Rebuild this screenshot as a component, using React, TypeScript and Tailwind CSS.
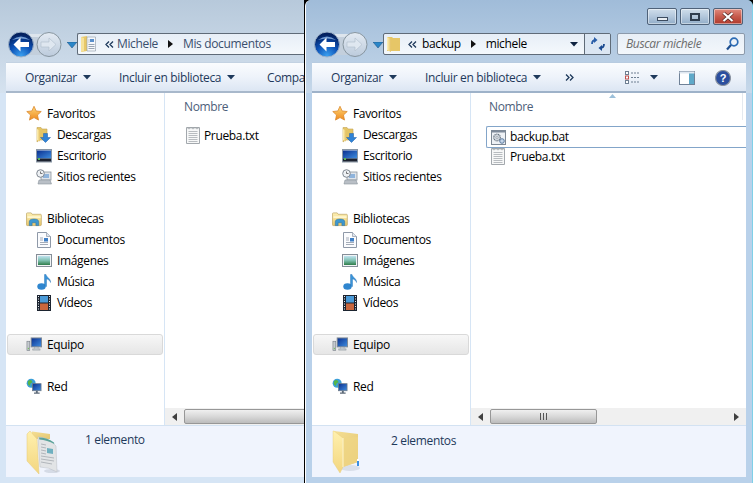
import React from "react";

const Grads = () => (
  <svg width="0" height="0" className="absolute">
    <defs>
      <linearGradient id="fold" x1="0" y1="0" x2="0" y2="1"><stop offset="0" stopColor="#fdf0b4" /><stop offset="1" stopColor="#e8c76c" /></linearGradient>
      <linearGradient id="foldd" x1="0" y1="0" x2="1" y2="0"><stop offset="0" stopColor="#fff2b8" /><stop offset="1" stopColor="#e3c063" /></linearGradient>
      <linearGradient id="flap" x1="0" y1="0" x2="0" y2="1"><stop offset="0" stopColor="#fff0ae" /><stop offset="1" stopColor="#f3d67f" /></linearGradient>
      <linearGradient id="bk" x1="0" y1="0" x2="1" y2="1"><stop offset="0" stopColor="#f5df94" /><stop offset="1" stopColor="#e3c672" /></linearGradient>
      <radialGradient id="back" cx="0.5" cy="0.95" r="0.85"><stop offset="0" stopColor="#3aa0f0" /><stop offset="0.55" stopColor="#0b4fb4" /><stop offset="1" stopColor="#04215f" /></radialGradient>
      <linearGradient id="fwd" x1="0" y1="0" x2="0" y2="1"><stop offset="0" stopColor="#e4ebf3" /><stop offset="1" stopColor="#bccbdc" /></linearGradient>
      <linearGradient id="star" x1="0" y1="0" x2="0" y2="1"><stop offset="0" stopColor="#fdd77a" /><stop offset="1" stopColor="#f08a1c" /></linearGradient>
      <linearGradient id="screen" x1="0" y1="0" x2="1" y2="1"><stop offset="0" stopColor="#0a2f8f" /><stop offset="1" stopColor="#3f8ee0" /></linearGradient>
      <linearGradient id="land" x1="0" y1="0" x2="0" y2="1"><stop offset="0" stopColor="#bfe2ef" /><stop offset="0.5" stopColor="#7fc0b0" /><stop offset="1" stopColor="#2f7d4a" /></linearGradient>
    </defs>
  </svg>
);

const StarIcon = () => (
  <svg width="17" height="17" viewBox="0 0 17 17"><path d="M8.5 .8l2.3 5 5.4.6-4 3.7 1.100 5.400-4.800-2.700-4.800 2.700 1.100-5.400-4-3.700 5.400-.6z" fill="url(#star)" stroke="#d9862a" strokeWidth=".8" /></svg>
);
const DownloadsIcon = () => (
  <svg width="16" height="17" viewBox="0 0 16 17">
    <path d="M1 1.500h4l1 1.500h5v11H3.500L1 16z" fill="#e5c565" stroke="#c2a455" strokeWidth=".6" />
    <path d="M1 3l3 1.500V15.500L1 14z" fill="url(#foldd)" />
    <path d="M7.500 7.500h4v4h3l-5 5-5-5h3z" fill="#2f83d6" stroke="#1f5fa8" strokeWidth=".5" />
  </svg>
);
const DesktopIcon = () => (
  <svg width="16" height="14" viewBox="0 0 16 14">
    <rect x=".5" y=".5" width="15" height="12.500" fill="#d8dee6" stroke="#8a97a6" />
    <rect x="1" y="1.500" width="14" height="8" fill="url(#screen)" />
    <rect x="1" y="9.500" width="14" height="3" fill="#1c2230" />
    <rect x="2" y="9" width="2" height="2" fill="#5ab55a" />
  </svg>
);
const RecentIcon = () => (
  <svg width="16" height="16" viewBox="0 0 16 16">
    <rect x="5" y="3" width="10" height="8" fill="#dfe4ea" stroke="#8c949c" strokeWidth=".8" />
    <rect x="7" y="5" width="6" height="4" fill="#8fb4dc" />
    <path d="M3 11h11l1.500 4H2z" fill="#b9bfc6" stroke="#8c949c" strokeWidth=".6" />
    <circle cx="4.500" cy="4.500" r="3.800" fill="#eef1f4" stroke="#7f8790" />
    <path d="M4.500 2.500v2h2" fill="none" stroke="#555" strokeWidth=".8" />
  </svg>
);
const LibraryIcon = () => (
  <svg width="17" height="16" viewBox="0 0 17 16">
    <path d="M.5 2.500q0-1 1-1h4l1 1.500h9q.8 0 .8 1V14q0 1-1 1H1.500q-1 0-1-1z" fill="url(#fold)" stroke="#b99f5c" strokeWidth=".7" />
    <rect x="1.500" y="5" width="14" height="2" fill="#fff6cf" />
    <path d="M3.500 15v-4q0-3 5-3t5 3v4h-3v-3h-4v3z" fill="#3d97cf" stroke="#1d6a9e" strokeWidth=".5" />
  </svg>
);
const DocIcon = () => (
  <svg width="14" height="16" viewBox="0 0 14 16">
    <path d="M.5.500h9l4 4v11H.5z" fill="#fbfcfe" stroke="#8f99a8" />
    <path d="M9.500.500v4h4" fill="#dfe5ee" stroke="#8f99a8" strokeWidth=".7" />
    <rect x="7" y="6" width="4" height="3.500" fill="#3f7fc6" />
    <path d="M3 6h3M3 8h3M3 10.500h8M3 12.500h8" stroke="#9aa3b0" strokeWidth=".9" />
  </svg>
);
const ImagesIcon = () => (
  <svg width="16" height="13" viewBox="0 0 16 13">
    <rect x=".5" y=".5" width="15" height="12" fill="#f2f4f6" stroke="#858e98" />
    <rect x="2" y="2" width="12" height="9" fill="url(#land)" />
  </svg>
);
const MusicIcon = () => (
  <svg width="15" height="16" viewBox="0 0 15 16">
    <ellipse cx="4.500" cy="12.500" rx="4.200" ry="3.200" fill="#2f86cf" />
    <path d="M7.500 12V.5l1.500 0c.5 3 5 4 4.500 8-.5-2-2.500-3.500-4-3.500V12.500z" fill="#3a93d8" stroke="#1f6cb0" strokeWidth=".4" />
  </svg>
);
const VideoIcon = () => (
  <svg width="14" height="16" viewBox="0 0 14 16">
    <rect width="14" height="16" fill="#1c2430" />
    <rect x="3" y="1" width="8" height="6.500" fill="#4a9ad8" />
    <rect x="3" y="8.500" width="8" height="6.500" fill="#c9663d" />
    <path d="M1 1.500h1M1 4h1M1 6.500h1M1 9h1M1 11.500h1M1 14h1M12 1.500h1M12 4h1M12 6.500h1M12 9h1M12 11.500h1M12 14h1" stroke="#e8edf2" />
  </svg>
);
const ComputerIcon = () => (
  <svg width="17" height="16" viewBox="0 0 17 16">
    <rect x="1" y="4" width="3" height="10" fill="#c5cacf" stroke="#737b83" strokeWidth=".6" />
    <rect x="2" y="11" width="1" height="1.500" fill="#6bc04b" />
    <rect x="5.500" y=".5" width="11" height="9.500" fill="url(#screen)" stroke="#7f8994" />
    <path d="M9 10h4v2h2v1.500H7V12h2z" fill="#bfc5cb" stroke="#858d95" strokeWidth=".4" />
  </svg>
);
const NetworkIcon = () => (
  <svg width="17" height="17" viewBox="0 0 17 17">
    <circle cx="5.500" cy="5" r="4.800" fill="#3b9fd8" />
    <path d="M2 3q2-2 4-1l1 2-2 1-1 3-2-2zM6 7l3 0 0 2-2 1z" fill="#56b548" />
    <rect x="7" y="5.500" width="9" height="7.500" fill="url(#screen)" stroke="#6f7a86" strokeWidth=".8" />
    <path d="M10.500 13h2v2h2v1.200h-6V15h2z" fill="#5d6a78" />
  </svg>
);
const TxtIcon = () => (
  <svg width="14" height="17" viewBox="0 0 14 17">
    <path d="M.5.500h13v16H.5z" fill="#f7f8f8" stroke="#a3a8ad" />
    <path d="M1 .5l2 1.500 2-1.500 2 1.500 2-1.500 2 1.500 2-1.500" fill="none" stroke="#9ea3a8" strokeWidth=".8" />
    <path d="M2.500 4.500h9M2.500 6.500h9M2.500 8.500h9M2.500 10.500h9M2.500 12.500h9M2.500 14.500h9" stroke="#b8bcc0" />
  </svg>
);
const BatIcon = () => (
  <svg width="15" height="15" viewBox="0 0 15 15">
    <rect x=".5" y=".5" width="14" height="14" fill="#eef1f5" stroke="#7e8894" />
    <rect x=".5" y=".5" width="14" height="2" fill="#7e8a9a" />
    <circle cx="6" cy="7.500" r="3.300" fill="#d2d8df" stroke="#68737f" strokeDasharray="1.200 .6" strokeWidth="1.200" />
    <circle cx="6" cy="7.500" r="1" fill="#fff" stroke="#68737f" strokeWidth=".5" />
    <circle cx="11" cy="11" r="2.300" fill="#c5d6ea" stroke="#4f6f96" strokeWidth=".9" />
  </svg>
);
const BigFolderDoc = () => (
  <svg width="36" height="46" viewBox="0 0 36 46">
    <ellipse cx="26" cy="42" rx="8" ry="2" fill="#c9d0dc" opacity=".7" />
    <path d="M6 2.500l18 2.500v5L6 10z" fill="url(#bk)" />
    <path d="M1 5l3-3 7 8 2 35-12-13z" fill="url(#flap)" stroke="#e6cb7a" strokeWidth=".5" />
    <path d="M12 8q10 0 18 9l1 26q-8-5-17-5z" fill="#e2e4e6" stroke="#b9bdc2" strokeWidth=".5" />
    <path d="M13 8.500q8 0 15 5l.3 1.500q-7-4-15-4.500z" fill="#5ba39a" />
    <path d="M21 19l6 1v5l-6-1z" fill="#6fb0c0" />
    <path d="M15 15l5 1M15 18l5 1M15 21l5 1M15 24l5 1M15 27l13 2M15 30l13 2M15 33l11 2" stroke="#a4a9b0" strokeWidth=".8" />
  </svg>
);
const BigFolderPlain = () => (
  <svg width="36" height="46" viewBox="0 0 36 46">
    <ellipse cx="18" cy="39" rx="10" ry="3" fill="#c9d0dc" opacity=".6" />
    <path d="M2 2l24 3v28L11 38z" fill="url(#bk)" />
    <path d="M11 9l15-1v25L11 38z" fill="#efd684" opacity=".7" />
    <path d="M1 2l1 0 9 7v29l-3 6-7-11z" fill="url(#flap)" stroke="#e6cb7a" strokeWidth=".4" />
    <path d="M11 9v29" stroke="#fff7d2" />
    <rect x="25" y="32" width="2" height="5" fill="#3b8fe0" />
    <rect x="25" y="30" width="2" height="2" fill="#fff" />
  </svg>
);

const Caret = ({ c = "#1e395b" }: { c?: string }) => (
  <svg width="8" height="5" viewBox="0 0 8 5"><path d="M0 0h8L4 4.500z" fill={c} /></svg>
);
const Chevrons = () => (
  <svg width="9" height="7" viewBox="0 0 9 7" fill="none" stroke="#1e395b" strokeWidth="1.300"><path d="M4 .5L1 3.500 4 6.500M8 .5L5 3.500 8 6.500" /></svg>
);
const Chevrons2 = () => (
  <svg width="9" height="7" viewBox="0 0 9 7" fill="none" stroke="#1e395b" strokeWidth="1.300"><path d="M1 .5L4 3.500 1 6.500M5 .5L8 3.500 5 6.500" /></svg>
);
const Sep = () => (
  <svg width="5" height="8" viewBox="0 0 5 8"><path d="M0 0l5 4-5 4z" fill="#111" /></svg>
);

const NavButtons = () => (
  <div className="flex items-start">
    <div className="ml-[1px] w-[57px] h-[27px]">
      <svg width="57" height="27" viewBox="0 0 57 27">
        <path d="M13 3h28v21H13z" fill="#c3cfdc" />
        <path d="M13 3h28v3H13z" fill="#dde5ed" />
        <circle cx="13" cy="13.500" r="12.500" fill="url(#back)" stroke="#9fb3c9" strokeWidth="1" />
        <path d="M4 9q9-7 18 0q-9-3-18 0z" fill="#8fb8e8" opacity=".8" />
        <path d="M12.500 6.500L5.500 13.500l7 7v-4.500h8.500v-5h-8.500z" fill="#fff" />
        <circle cx="41" cy="13.500" r="12" fill="url(#fwd)" stroke="#87959f" />
        <path d="M41 7l7 6.500-7 6.500v-4h-8v-5h8z" fill="#dfe7f0" stroke="#aebccb" strokeWidth=".6" />
      </svg>
    </div>
    <div className="ml-[2px] w-[10px] mt-[11px]">
      <svg width="10" height="6" viewBox="0 0 10 6"><path d="M0 0h10L5 6z" fill="#2a86c8" stroke="#1b4a78" strokeWidth=".5" /></svg>
    </div>
  </div>
);

const NavItem = ({ icon, label, sub }: { icon: React.ReactNode; label: string; sub?: boolean }) => (
  <div className={`flex items-center h-[21px] text-black ${sub ? "pl-[30px]" : "pl-[20px]"}`}>
    <span className="w-[16px] flex justify-center items-center">{icon}</span>
    <span className="ml-[5px]">{label}</span>
  </div>
);

const NavPane = () => (
  <div className="w-[158px] shrink-0 pt-[10px] bg-white">
    <NavItem icon={<StarIcon />} label="Favoritos" />
    <NavItem sub icon={<DownloadsIcon />} label="Descargas" />
    <NavItem sub icon={<DesktopIcon />} label="Escritorio" />
    <NavItem sub icon={<RecentIcon />} label="Sitios recientes" />
    <div className="h-[21px]" />
    <NavItem icon={<LibraryIcon />} label="Bibliotecas" />
    <NavItem sub icon={<DocIcon />} label="Documentos" />
    <NavItem sub icon={<ImagesIcon />} label="Imágenes" />
    <NavItem sub icon={<MusicIcon />} label="Música" />
    <NavItem sub icon={<VideoIcon />} label="Vídeos" />
    <div className="h-[21px]" />
    <div className="mx-[1px] w-[156px] h-[21px] rounded-[3px] border border-[#d9d9d9] bg-gradient-to-b from-[#f7f7f7] to-[#e6e6e6] flex items-center pl-[18px] text-black">
      <span className="w-[16px] flex justify-center"><ComputerIcon /></span>
      <span className="ml-[5px]">Equipo</span>
    </div>
    <div className="h-[21px]" />
    <NavItem icon={<NetworkIcon />} label="Red" />
  </div>
);

const ArrowBtn = ({ right }: { right?: boolean }) => (
  <div className="w-[19px] h-full shrink-0 flex items-center justify-center">
    <svg width="5" height="8" viewBox="0 0 5 8"><path d={right ? "M0 0l5 4-5 4z" : "M5 0L0 4l5 4z"} fill="#404040" /></svg>
  </div>
);

const Scrollbar = ({ thumb, showEnd }: { thumb: number; showEnd?: boolean }) => (
  <div className="h-[17px] shrink-0 flex items-center bg-[#f0f0f0] overflow-hidden">
    <ArrowBtn />
    <div className="h-[15px] shrink-0 rounded-[2px] border border-[#979797] bg-gradient-to-b from-[#f0f0f0] via-[#d8d8d8] to-[#bcbcbc] flex items-center justify-center gap-[1px]" style={{ width: thumb }}>
      {showEnd && (
        <>
          <span className="w-[1px] h-[7px] bg-[#555]" />
          <span className="w-[1px] h-[7px] bg-[#555] ml-[1px]" />
          <span className="w-[1px] h-[7px] bg-[#555] ml-[1px]" />
        </>
      )}
    </div>
    <div className="flex-1" />
    {showEnd && <ArrowBtn right />}
  </div>
);

const ToolBtn = ({ label, caret = true, w }: { label: string; caret?: boolean; w: string }) => (
  <div className={`flex items-center shrink-0 ${w}`}>
    <span className="whitespace-nowrap">{label}</span>
    {caret && <span className="ml-[6px] flex"><Caret /></span>}
  </div>
);

const WinButton = ({ kind }: { kind: "min" | "max" | "close" }) => (
  <div className={`w-[30px] h-[17px] rounded-[2px] border border-[#4f6279] flex items-center justify-center shadow-[inset_0_0_0_1px_rgba(255,255,255,.45)] ${kind === "close" ? "bg-gradient-to-b from-[#e08a7e] via-[#c65a4c] to-[#b0392c]" : "bg-gradient-to-b from-[#d0deeb] via-[#b3c7dc] to-[#92adc8]"}`}>
    {kind === "min" && <span className="block w-[11px] h-[4px] mt-[4px] bg-[#e8edf2] border border-[#3c4c60]" />}
    {kind === "max" && <span className="block w-[10px] h-[8px] bg-transparent border-2 border-[#2e3d4f]" />}
    {kind === "close" && (
      <svg width="12" height="10" viewBox="0 0 12 10"><path d="M1.500 1l9 8M10.500 1l-9 8" stroke="#4a2320" strokeWidth="3.400" /><path d="M1.500 1l9 8M10.500 1l-9 8" stroke="#fff" strokeWidth="2.200" /></svg>
    )}
  </div>
);

const StatusBar = ({ text, folder, textTop }: { text: string; folder: React.ReactNode; textTop: string }) => (
  <div className="h-[52px] shrink-0 border-t border-[#d3e2f2] bg-[#f0f4fd] flex items-start pl-[20px]">
    <span className="w-[36px] mt-[3px] flex">{folder}</span>
    <span className={`ml-[23px] text-[#1e395b] ${textTop}`}>{text}</span>
  </div>
);

export default function App() {
  return (
    <div className="w-[753px] h-[483px] flex bg-black overflow-hidden text-[12px] tracking-[-0.35px] [font-family:'Open_Sans',sans-serif]">
      <Grads />
      {/* Left window */}
      <div className="w-[304px] h-full shrink-0 flex flex-col overflow-hidden pl-[6px] pb-[6px] bg-[#d6e5f5] mr-[1px]">
        <div className="-ml-[6px] shrink-0 h-[93px] bg-gradient-to-b from-[#b7c9db] to-[#d5e2ef] flex flex-col">
          <div className="h-[31px]" />
          <div className="h-[31px] flex pl-[7px]">
            <NavButtons />
            <div className="h-[22px] mt-[2px] flex-1 flex items-center rounded-l-[2px] border border-r-0 border-[#5f6b78] bg-gradient-to-b from-[#e7eef7] to-[#f4f8fc] pl-[3px] text-[#3a4f6d] whitespace-nowrap overflow-hidden">
              <svg width="15" height="16" viewBox="0 0 15 16" className="shrink-0"><path d="M0 1l6-1v15l-6 1z" fill="#e8c868" /><path d="M6 1h8.500v14H6z" fill="#f6f8fb" stroke="#8c97a5" strokeWidth=".6" /><rect x="9" y="3" width="4" height="3" fill="#5a8fcb" /><path d="M7.500 4h1M7.500 6h1M7.500 8.500h6M7.500 10.500h6M7.500 12.500h6" stroke="#9aa5b3" /><path d="M0 1l3 1v13l-3 1z" fill="#f6e29a" /></svg>
              <span className="ml-[9px] flex"><Chevrons /></span>
              <span className="ml-[3px]">Michele</span>
              <span className="mx-[10px] flex"><Sep /></span>
              <span>Mis documentos</span>
            </div>
          </div>
          <div className="h-[31px] ml-[6px] flex items-center pl-[19px] pt-[1px] border-t border-b-2 border-t-[#c3d2e2] border-b-[#a8b8cb] bg-gradient-to-b from-[#fafcfe] via-[#eef3fa] to-[#dce6f3] text-[#1e395b] overflow-hidden">
            <ToolBtn label="Organizar" w="w-[94px]" />
            <ToolBtn label="Incluir en biblioteca" w="w-[148px]" />
            <ToolBtn label="Compar" caret={false} w="w-[37px]" />
          </div>
        </div>
        <div className="flex-1 flex min-h-0 bg-white">
          <NavPane />
          <div className="flex-1 min-w-0 border-l border-[#d6e5f5] flex flex-col">
            <div className="flex-1 pl-[19px]">
              <div className="h-[27px] flex items-center text-[#4c607a]">Nombre</div>
              <div className="flex items-center h-[21px] mt-[5px] pl-[2px]">
                <TxtIcon />
                <span className="ml-[4px] text-black">Prueba.txt</span>
              </div>
            </div>
            <Scrollbar thumb={140} />
          </div>
        </div>
        <StatusBar text="1 elemento" folder={<BigFolderDoc />} textTop="mt-[5px]" />
      </div>
      {/* Right window */}
      <div className="flex-1 h-full rounded-t-[6px] flex flex-col overflow-hidden bg-[#b9d1ea] border-l border-l-white pl-[6px] pr-[6px] pb-[6px] border-r border-r-[#7fd0e8]">
        <div className="-mx-[6px] shrink-0 h-[93px] bg-gradient-to-b from-[#a0bcd9] to-[#c6d8ea] flex flex-col">
          <div className="h-[31px] flex justify-end items-start pt-[8px] pr-[9px] gap-[3px]">
            <WinButton kind="min" />
            <WinButton kind="max" />
            <WinButton kind="close" />
          </div>
          <div className="h-[31px] flex pl-[7px] pr-[7px]">
            <NavButtons />
            <div className="w-[228px] h-[22px] mt-[2px] shrink-0 flex items-center rounded-[2px] border border-[#5f6b78] bg-gradient-to-b from-[#e7eef7] to-[#f4f8fc] text-black whitespace-nowrap overflow-hidden">
              <div className="flex-1 flex items-center pl-[3px]">
                <svg width="14" height="16" viewBox="0 0 14 16"><path d="M0 1h5l1 1h7v13H0z" fill="#e6c667" /><path d="M0 1l4 2v13l-4-2z" fill="url(#foldd)" /></svg>
                <span className="ml-[7px] flex"><Chevrons /></span>
                <span className="ml-[5px]">backup</span>
                <span className="mx-[10px] flex"><Sep /></span>
                <span>michele</span>
                <span className="ml-auto mr-[6px] flex"><Caret c="#0f2340" /></span>
              </div>
              <div className="w-[26px] h-full border-l border-[#5f6b78] bg-[#dbe6f2] flex items-center justify-center">
                <svg width="14" height="14" viewBox="0 0 14 14" fill="none"><path d="M1 7q0-4 4-4" stroke="#2a5ea8" strokeWidth="1.800" /><path d="M3 0l3.500 3L3 6z" fill="#2a5ea8" /><path d="M13 7q0 4-4 4" stroke="#1a4a90" strokeWidth="1.800" /><path d="M11 14l-3.500-3 3.500-3z" fill="#1a4a90" /></svg>
              </div>
            </div>
            <div className="ml-[6px] w-[128px] h-[22px] mt-[2px] flex items-center justify-between rounded-[2px] border border-[#8c9aab] bg-gradient-to-b from-[#e8eff7] to-[#f3f7fb] pl-[8px] pr-[5px] italic text-[#6d6d6d]">
              <span className="whitespace-nowrap">Buscar michele</span>
              <svg width="13" height="14" viewBox="0 0 13 14" fill="none"><circle cx="8" cy="5" r="3.800" stroke="#2d6cb4" strokeWidth="1.700" /><path d="M5 8l-4 4.500" stroke="#1e4f90" strokeWidth="2.200" /></svg>
            </div>
          </div>
          <div className="h-[31px] mx-[6px] flex items-center pl-[19px] pt-[1px] border-t border-b-2 border-t-[#b7cbe0] border-b-[#9eb2c9] bg-gradient-to-b from-[#fafcfe] via-[#eef3fa] to-[#dce6f3] text-[#1e395b]">
            <ToolBtn label="Organizar" w="w-[94px]" />
            <ToolBtn label="Incluir en biblioteca" w="w-[140px]" />
            <Chevrons2 />
            <svg width="15" height="13" viewBox="0 0 15 13" className="ml-[51px]" fill="none"><rect x=".5" y=".5" width="3" height="3" fill="#fff" stroke="#6f7f92" /><rect x=".5" y="5" width="3" height="3" fill="#fff" stroke="#c0504d" /><rect x=".5" y="9.500" width="3" height="3" fill="#fff" stroke="#6f7f92" /><path d="M6 2h9M6 6.500h9M6 11h9" stroke="#6f7f92" strokeDasharray="2 1" /></svg>
            <span className="ml-[10px] flex"><Caret /></span>
            <svg width="16" height="14" viewBox="0 0 16 14" className="ml-[21px]"><rect x=".5" y=".5" width="15" height="13" fill="#fff" stroke="#6f8197" /><rect x="10" y="1" width="5" height="12" fill="#5fa9c9" /><rect x=".5" y=".5" width="15" height="2" fill="#dfe7f0" /></svg>
            <svg width="16" height="16" viewBox="0 0 16 16" className="ml-[20px]"><circle cx="8" cy="8" r="7.500" fill="#2c4f9e" stroke="#8a93a0" strokeWidth="1.200" /><text x="8" y="12" textAnchor="middle" fontSize="11" fontWeight="700" fill="#fff" fontFamily="Liberation Sans, sans-serif">?</text></svg>
          </div>
        </div>
        <div className="flex-1 flex min-h-0 bg-white">
          <NavPane />
          <div className="flex-1 min-w-0 border-l border-[#d6e5f5] flex flex-col">
            <div className="flex-1 relative">
              <div className="absolute left-[138px] top-[1px]"><svg width="7" height="4" viewBox="0 0 7 4"><path d="M0 4l3.500-4L7 4z" fill="#9cc0da" /></svg></div>
              <div className="absolute right-[3px] top-0 h-[27px] w-[1px] bg-[#e4e9ef]" />
              <div className="h-[27px] flex items-center pl-[18px] text-[#4c607a]">Nombre</div>
              <div className="ml-[15px] mt-[6px] h-[22px] flex items-center pl-[4px] rounded-l-[2px] border border-r-0 border-[#83a5c9] text-black">
                <BatIcon />
                <span className="ml-[4px]">backup.bat</span>
              </div>
              <div className="flex items-center h-[17px] pl-[20px]">
                <TxtIcon />
                <span className="ml-[5px] text-black">Prueba.txt</span>
              </div>
            </div>
            <Scrollbar thumb={107} showEnd />
          </div>
        </div>
        <StatusBar text="2 elementos" folder={<BigFolderPlain />} textTop="mt-[6px]" />
      </div>
    </div>
  );
}
